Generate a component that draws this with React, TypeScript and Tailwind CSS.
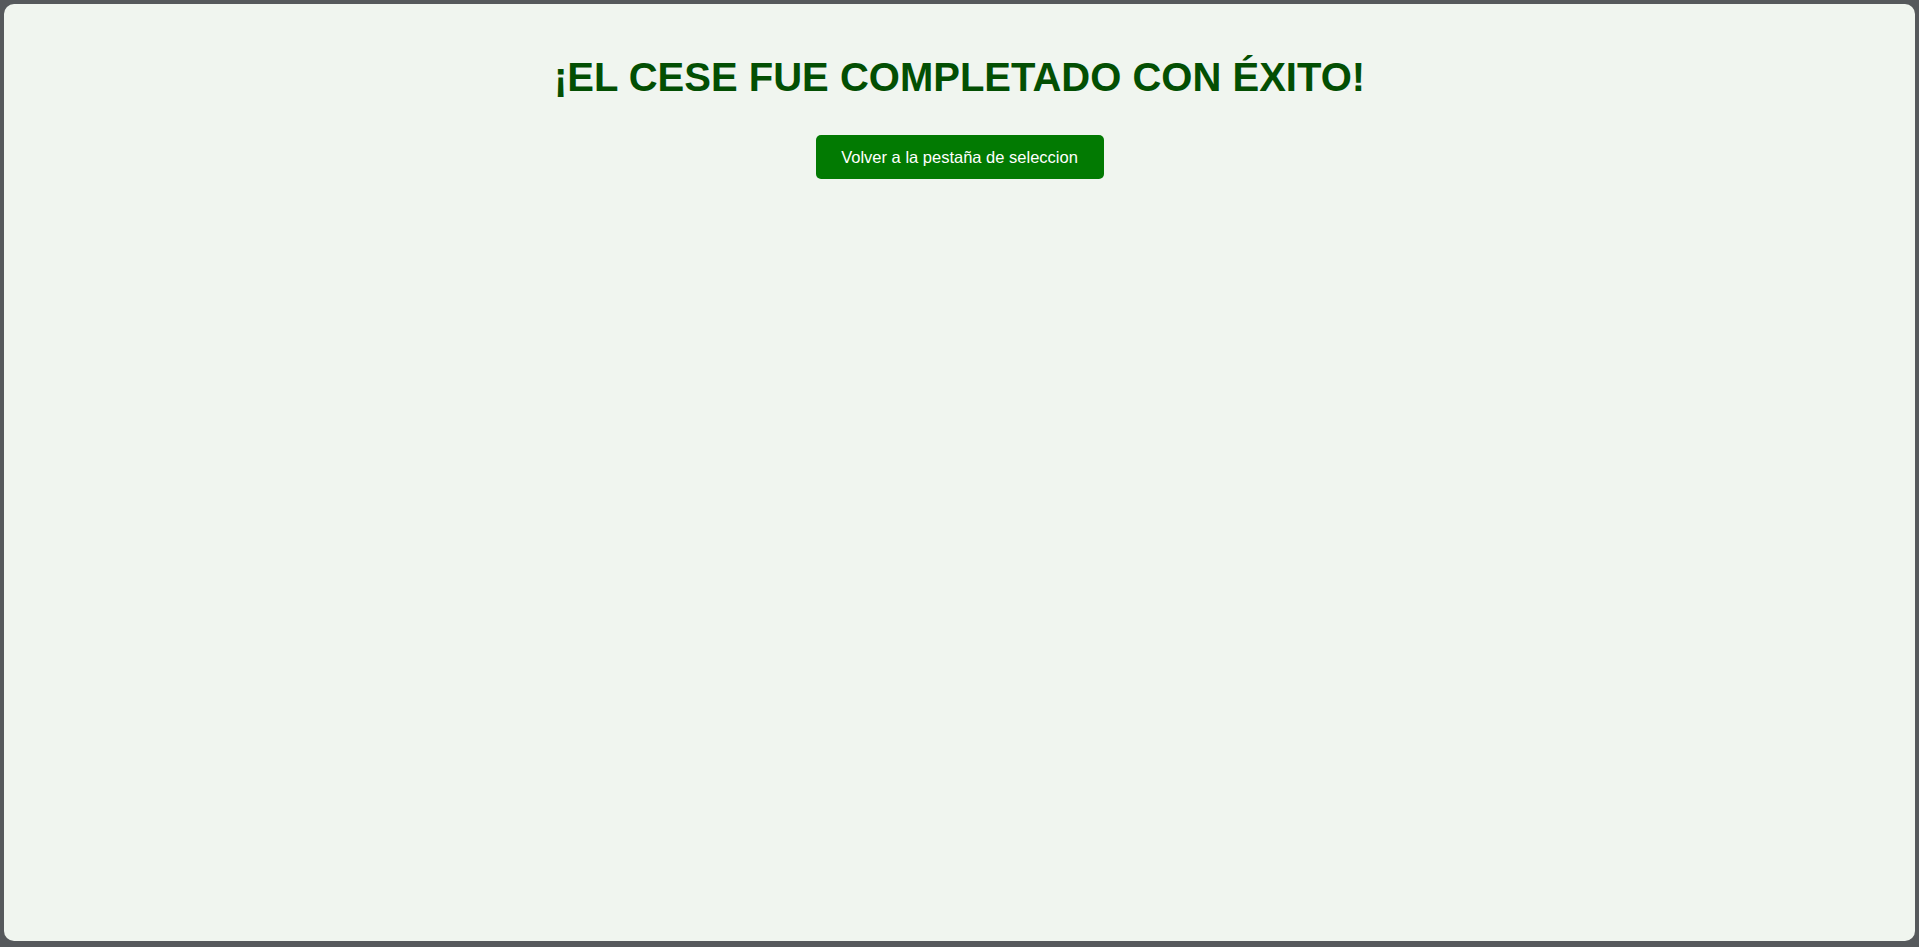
export default function App() {
  return (
    <div className="h-[947px] w-full bg-[#56595c] pt-[4px] px-[4px] pb-[6px] flex flex-col" style={{ fontFamily: '"Liberation Sans", Arial, sans-serif' }}>
      <div className="flex-1 rounded-[10px] bg-[#f0f5ef] flex flex-col items-center pt-[50px]">
        <h1 className="text-[40px] leading-[46px] font-bold text-[#034f03]">¡EL CESE FUE COMPLETADO CON ÉXITO!</h1>
        <button className="mt-[35px] h-[44px] w-[288px] rounded-[5px] bg-[#027a02] text-white text-[16.5px]">Volver a la pestaña de seleccion</button>
      </div>
    </div>
  );
}
